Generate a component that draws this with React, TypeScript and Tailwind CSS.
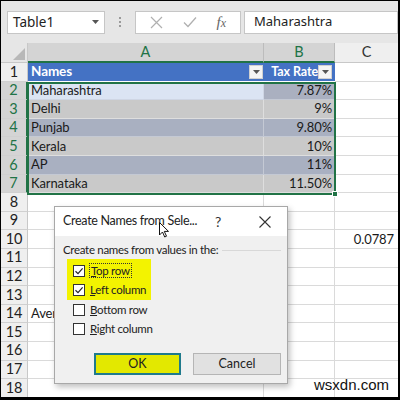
import React from "react";

const cellFont = { fontFamily: "Lato, 'Liberation Sans', sans-serif" };
const uiFont = { fontFamily: "'Noto Sans', 'Open Sans', sans-serif" };
const dlgFont = { fontFamily: "Lato, 'Noto Sans', sans-serif" };

type Row = { n: number; a?: string; b?: string; c?: string; tone?: string };

const rows: Row[] = [
  { n: 1, a: "Names", b: "Tax Rate", tone: "head" },
  { n: 2, a: "Maharashtra", b: "7.87%", tone: "first" },
  { n: 3, a: "Delhi", b: "9%", tone: "gray" },
  { n: 4, a: "Punjab", b: "9.80%", tone: "blue" },
  { n: 5, a: "Kerala", b: "10%", tone: "gray" },
  { n: 6, a: "AP", b: "11%", tone: "blue" },
  { n: 7, a: "Karnataka", b: "11.50%", tone: "gray" },
  { n: 8 },
  { n: 9 },
  { n: 10, c: "0.0787" },
  { n: 11 },
  { n: 12 },
  { n: 13 },
  { n: 14, a: "Aver" },
  { n: 15 },
  { n: 16 },
  { n: 17 },
  { n: 18 },
];

function FilterButton() {
  return (
    <span className="flex h-[14px] w-[14px] shrink-0 items-center justify-center bg-[#f4f4f4] border border-[#d0d0d0]">
      <svg width="7" height="4" viewBox="0 0 7 4">
        <path d="M0 0h7L3.5 4z" fill="#555" />
      </svg>
    </span>
  );
}

function Check({ checked }: { checked?: boolean }) {
  return (
    <span className="flex h-[12px] w-[12px] shrink-0 items-center justify-center border border-[#333] bg-white">
      {checked && (
        <svg width="10" height="10" viewBox="0 0 10 10">
          <path d="M1.5 5.2 4 7.6 8.6 2.4" fill="none" stroke="#222" strokeWidth="1.2" />
        </svg>
      )}
    </span>
  );
}

function GridRow({ r }: { r: Row }) {
  const selected = r.n >= 2 && r.n <= 7;
  let aBg = "bg-white border-r border-b border-[#dadada]";
  let bBg = "bg-white border-r border-b border-[#dadada]";
  if (r.tone === "head") {
    aBg = "bg-[#4472c4] border-b border-white";
    bBg = "bg-[#4472c4] border-b border-white";
  } else if (r.tone === "first") {
    aBg = "bg-[#dbe4f3] border-r border-b border-[#cfd6e4]";
    bBg = "bg-[#aab0c0] border-b border-[#c4c9d4]";
  } else if (r.tone === "gray") {
    aBg = "bg-[#c9c9c9] border-r border-b border-[#dedede]";
    bBg = "bg-[#c9c9c9] border-b border-[#dedede]";
  } else if (r.tone === "blue") {
    aBg = "bg-[#a9b0c1] border-r border-b border-[#c4c9d4]";
    bBg = "bg-[#a9b0c1] border-b border-[#c4c9d4]";
  }
  const head = r.tone === "head";
  return (
    <div className="flex h-[18.6px] text-[13px] leading-none tracking-[-0.1px]" style={cellFont}>
      <div
        className={`flex w-[27px] shrink-0 items-center justify-center border-b border-[#d0d0d0] text-[14.5px] ${
          selected
            ? "bg-[#d4d4d4] text-[#217346] border-r-2 border-r-[#217346]"
            : "bg-[#efefef] text-[#222] border-r border-r-[#c8c8c8]"
        }`}
      >
        {r.n}
      </div>
      <div
        className={`flex w-[236px] shrink-0 items-center justify-between pl-[3px] pr-[1px] whitespace-nowrap ${aBg} ${
          head ? "font-bold text-white text-[13.5px]" : "text-[#1a1a1a]"
        }`}
      >
        <span>{r.a}</span>
        {head && <FilterButton />}
      </div>
      <div
        className={`flex w-[71px] shrink-0 items-center justify-end pr-[3px] whitespace-nowrap ${bBg} ${
          head ? "font-bold text-white justify-between pl-[3px] pr-[1px] text-[12.5px]" : "text-[#1a1a1a]"
        }`}
      >
        <span>{r.b}</span>
        {head && <FilterButton />}
      </div>
      <div className="flex flex-1 items-center justify-end pr-[4px] border-b border-[#dadada] bg-white text-[#1a1a1a]">
        {r.c}
      </div>
    </div>
  );
}

export default function App() {
  return (
    <div className="relative h-[400px] w-[400px] overflow-hidden border-t border-l border-r-2 border-b-[3px] border-black bg-white">
      {/* formula bar */}
      <div className="flex h-[42px] items-center gap-0 bg-[#e6e6e6] pl-[6px]" style={uiFont}>
        <div className="flex h-[23px] w-[98px] items-center justify-between border border-[#c6c6c6] bg-white pl-[5px] pr-[5px] text-[13.5px] text-[#222]">
          <span>Table1</span>
          <svg width="7" height="4" viewBox="0 0 7 4">
            <path d="M0 0h7L3.5 4z" fill="#555" />
          </svg>
        </div>
        <div className="flex w-[30px] flex-col items-center justify-center gap-[2px]">
          <span className="h-[2px] w-[2px] bg-[#9a9a9a]" />
          <span className="h-[2px] w-[2px] bg-[#9a9a9a]" />
          <span className="h-[2px] w-[2px] bg-[#9a9a9a]" />
        </div>
        <div className="flex h-[23px] w-[106px] items-center justify-around border border-[#c6c6c6] bg-white px-[4px]">
          <svg width="13" height="13" viewBox="0 0 13 13">
            <path d="M1 1l11 11M12 1 1 12" stroke="#b0b0b0" strokeWidth="1.2" />
          </svg>
          <svg width="14" height="12" viewBox="0 0 14 12">
            <path d="M1 6.5 5 10.5 13 1.5" fill="none" stroke="#b0b0b0" strokeWidth="1.3" />
          </svg>
          <span
            className="text-[15px] italic text-[#666]"
            style={{ fontFamily: "'Liberation Serif', 'DejaVu Serif', serif" }}
          >
            f<span className="text-[12px]">x</span>
          </span>
        </div>
        <div className="ml-[3px] flex h-[23px] flex-1 items-center border border-[#c6c6c6] bg-white pl-[9px] text-[13px] text-[#222]">
          Maharashtra
        </div>
      </div>

      {/* column headers */}
      <div className="flex h-[20px] text-[14.5px] leading-none" style={cellFont}>
        <div className="relative w-[27px] shrink-0 border-r border-b border-[#c8c8c8] bg-[#e6e6e6]">
          <svg className="absolute bottom-[2px] right-[2px]" width="12" height="12" viewBox="0 0 12 12">
            <path d="M12 0v12H0z" fill="#b8b8b8" />
          </svg>
        </div>
        <div className="flex w-[236px] shrink-0 items-center justify-center border-r border-[#bcbcbc] border-b-2 border-b-[#217346] bg-[#d4d4d4] text-[#217346]">
          A
        </div>
        <div className="flex w-[71px] shrink-0 items-center justify-center border-r border-[#bcbcbc] border-b-2 border-b-[#217346] bg-[#d4d4d4] text-[#217346]">
          B
        </div>
        <div className="flex flex-1 items-center justify-center border-b border-[#c8c8c8] bg-[#efefef] text-[#333]">
          C
        </div>
      </div>

      {rows.map((r) => (
        <GridRow key={r.n} r={r} />
      ))}

      {/* selection outline A2:B7 */}
      <div className="pointer-events-none absolute left-[26px] top-[80.6px] h-[113px] w-[309px] border-2 border-[#217346]">
        <span className="absolute -bottom-[4px] -right-[4px] h-[6px] w-[6px] border border-white bg-[#217346]" />
      </div>

      {/* dialog */}
      <div
        className="absolute left-[53px] top-[205px] flex h-[178px] w-[234px] flex-col border border-[#a8a8a8] bg-[#f0f0f0] shadow-[2px_3px_6px_rgba(0,0,0,0.25)]"
        style={dlgFont}
      >
        <div className="flex h-[29px] items-center whitespace-nowrap bg-white pl-[8px] text-[12.5px] tracking-[-0.3px] text-[#222]">
          <span className="flex-1">Create Names from Sele...</span>
          <span className="w-[44px] text-[14px] text-[#333]">?</span>
          <svg className="mr-[16px]" width="12" height="12" viewBox="0 0 12 12">
            <path d="M0.5 0.5l11 11M11.5 0.5l-11 11" stroke="#333" strokeWidth="1.1" />
          </svg>
        </div>
        <div className="flex flex-col whitespace-nowrap pt-[6px] text-[11.5px] tracking-[-0.3px] text-[#222]">
          <div className="flex items-center gap-[4px] pl-[8px] pr-[6px] leading-[16px]">
            <span>Create names from values in the:</span>
            <span className="h-px flex-1 bg-[#d8d8d8]" />
          </div>
          <div className="ml-[12px] mt-[1px] flex w-[84px] flex-col bg-[#f3f300] pl-[6px] pt-[2px] pb-[1px]">
            <div className="flex h-[19px] items-center gap-[4px]">
              <Check checked />
              <span className="border border-dotted border-[#333] px-[1px] leading-[13px]">
                <span className="underline">T</span>op row
              </span>
            </div>
            <div className="flex h-[19px] items-center gap-[5px]">
              <Check checked />
              <span>
                <span className="underline">L</span>eft column
              </span>
            </div>
          </div>
          <div className="flex h-[19px] items-center gap-[5px] pl-[18px]">
            <Check />
            <span>
              <span className="underline">B</span>ottom row
            </span>
          </div>
          <div className="flex h-[19px] items-center gap-[5px] pl-[18px]">
            <Check />
            <span>
              <span className="underline">R</span>ight column
            </span>
          </div>
          <div className="mt-[15px] flex gap-[12px] pl-[39px] tracking-normal">
            <div className="flex h-[22px] w-[87px] items-center justify-center border-2 border-[#1f7a8c] bg-[#e3e800] text-[12.5px]">
              OK
            </div>
            <div className="flex h-[22px] w-[88px] items-center justify-center border border-[#b5b5b5] bg-[#e1e1e1] text-[12.5px]">
              Cancel
            </div>
          </div>
        </div>
      </div>

      {/* mouse pointer */}
      <svg className="absolute left-[158px] top-[221px]" width="10" height="16" viewBox="0 0 10 16">
        <path d="M0.5 0.5v12.5l3-3 2.2 5 1.8-0.8-2.2-4.8h4.2z" fill="#fff" stroke="#111" strokeWidth="1" />
      </svg>

      <div
        className="absolute bottom-[1px] right-[9px] text-[15px] text-[#111]"
        style={{ fontFamily: "'Liberation Sans', Arial, sans-serif" }}
      >
        wsxdn.com
      </div>
    </div>
  );
}
